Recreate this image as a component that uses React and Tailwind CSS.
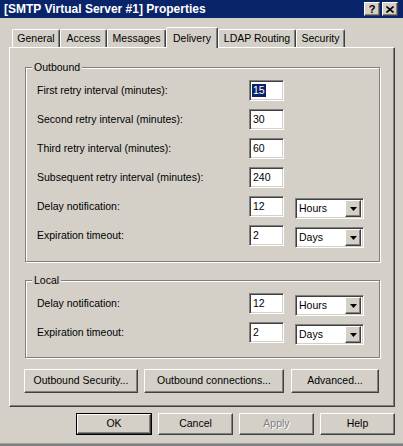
import React from "react";

const raised =
  "border border-t-white border-l-white border-r-[#404040] border-b-[#404040] shadow-[inset_-1px_-1px_0_#808080]";
const sunken =
  "border border-t-[#808080] border-l-[#808080] border-r-white border-b-white shadow-[inset_1px_1px_0_#404040,inset_-1px_-1px_0_#d4d0c8]";

function Input({ value, selected }) {
  return (
    <div className={`${sunken} bg-white w-[35px] h-[21px] flex items-center pl-[3px] leading-none`}>
      {selected ? (
        <span className="bg-[#0a246a] text-white px-[1px] -ml-[1px] py-[1px]">{value}</span>
      ) : (
        <span>{value}</span>
      )}
    </div>
  );
}

function Select({ value }) {
  return (
    <div className={`${sunken} bg-white w-[69px] h-[21px] mt-[2px] flex items-center pl-[3px] pr-[2px]`}>
      <span className="flex-1 leading-none">{value}</span>
      <div className={`${raised} bg-[#d4d0c8] w-[16px] h-[17px] flex items-center justify-center`}>
        <svg width="7" height="4" viewBox="0 0 7 4">
          <path d="M0 0H7L3.5 4Z" fill="#000" />
        </svg>
      </div>
    </div>
  );
}

function Row({ label, value, unit, selected }) {
  return (
    <div className="flex items-start h-[21px]">
      <div className="w-[223px] shrink-0 pl-[11px] h-[21px] flex items-center">{label}</div>
      <Input value={value} selected={selected} />
      {unit && (
        <div className="ml-[11px]">
          <Select value={unit} />
        </div>
      )}
    </div>
  );
}

function Group({ title, children, className }) {
  return (
    <div
      className={`relative border border-[#808080] shadow-[inset_1px_1px_0_#fff,1px_1px_0_#fff] w-[355px] ${className}`}
    >
      <div className="absolute -top-[7px] left-[6px] bg-[#d4d0c8] px-[2px] leading-[13px]">{title}</div>
      <div className="flex flex-col gap-[8px] pt-[12px]">{children}</div>
    </div>
  );
}

function Button({ children, className, disabled, isDefault }) {
  if (isDefault) {
    return (
      <div className={`border border-black ${className}`}>
        <div className={`${raised} h-full flex items-center justify-center`}>{children}</div>
      </div>
    );
  }
  return (
    <div className={`${raised} flex items-center justify-center ${className}`}>
      {disabled ? (
        <span className="text-[#808080] [text-shadow:1px_1px_0_#fff]">{children}</span>
      ) : (
        children
      )}
    </div>
  );
}

function Tab({ label, width, selected }) {
  if (selected) {
    return (
      <div
        className={`relative z-10 h-[21px] -mb-[1px] bg-[#d4d0c8] border-t border-l border-t-white border-l-white border-r border-r-[#404040] shadow-[inset_-1px_0_0_#808080] rounded-t-[2px] flex items-start justify-center pt-[3px] ${width}`}
      >
        {label}
      </div>
    );
  }
  return (
    <div
      className={`h-[18px] border-t border-l border-t-white border-l-white border-r border-r-[#404040] shadow-[inset_-1px_0_0_#808080] rounded-t-[2px] flex items-center justify-center ${width}`}
    >
      {label}
    </div>
  );
}

export default function App() {
  return (
    <div className="w-[403px] h-[446px] bg-[#d4d0c8] text-black text-[10.5px] font-['Liberation_Sans',Arial,sans-serif] flex flex-col overflow-hidden">
      {/* Title bar */}
      <div className="h-[18px] bg-[#0a246a] flex items-center pl-[4px] pr-[4px]">
        <div className="flex-1 text-white font-bold text-[12px] leading-none">
          [SMTP Virtual Server #1] Properties
        </div>
        <div className={`${raised} bg-[#d4d0c8] w-[16px] h-[14px] flex items-center justify-center font-bold text-[11px] leading-none`}>
          ?
        </div>
        <div className={`${raised} bg-[#d4d0c8] w-[16px] h-[14px] ml-[2px] mr-[1px] flex items-center justify-center`}>
          <svg width="8" height="7" viewBox="0 0 8 7">
            <path d="M0.5 0.5L7.5 6.5M7.5 0.5L0.5 6.5" stroke="#000" strokeWidth="1.6" />
          </svg>
        </div>
      </div>

      {/* Tabs */}
      <div className="pl-[12px] mt-[9px] flex items-end h-[20px]">
        <Tab label="General" width="w-[48px]" />
        <Tab label="Access" width="w-[47px]" />
        <Tab label="Messages" width="w-[59px]" />
        <Tab label="Delivery" width="w-[52px]" selected />
        <Tab label="LDAP Routing" width="w-[78px]" />
        <Tab label="Security" width="w-[49px]" />
      </div>

      {/* Panel */}
      <div className={`${raised} ml-[9px] w-[386px] h-[360px] pl-[15px] pt-[19px] flex flex-col`}>
        <Group title="Outbound" className="h-[195px]">
          <Row label="First retry interval (minutes):" value="15" selected />
          <Row label="Second retry interval (minutes):" value="30" />
          <Row label="Third retry interval (minutes):" value="60" />
          <Row label="Subsequent retry interval (minutes):" value="240" />
          <Row label="Delay notification:" value="12" unit="Hours" />
          <Row label="Expiration timeout:" value="2" unit="Days" />
        </Group>

        <Group title="Local" className="h-[78px] mt-[18px]">
          <Row label="Delay notification:" value="12" unit="Hours" />
          <Row label="Expiration timeout:" value="2" unit="Days" />
        </Group>

        <div className="flex mt-[11px] -ml-[1px]">
          <Button className="w-[114px] h-[24px]">Outbound Security...</Button>
          <Button className="w-[140px] h-[24px] ml-[6px]">Outbound connections...</Button>
          <Button className="w-[88px] h-[24px] ml-[7px]">Advanced...</Button>
        </div>
      </div>

      {/* Bottom buttons */}
      <div className="flex justify-end gap-[6px] pr-[8px] mt-[6px]">
        <Button className="w-[76px] h-[22px]" isDefault>OK</Button>
        <Button className="w-[75px] h-[22px]">Cancel</Button>
        <Button className="w-[75px] h-[22px]" disabled>Apply</Button>
        <Button className="w-[75px] h-[22px]">Help</Button>
      </div>

      <div className="flex-1" />
      <div className="h-[3px] bg-[#808080] border-t border-[#a0a0a0]" />
    </div>
  );
}
